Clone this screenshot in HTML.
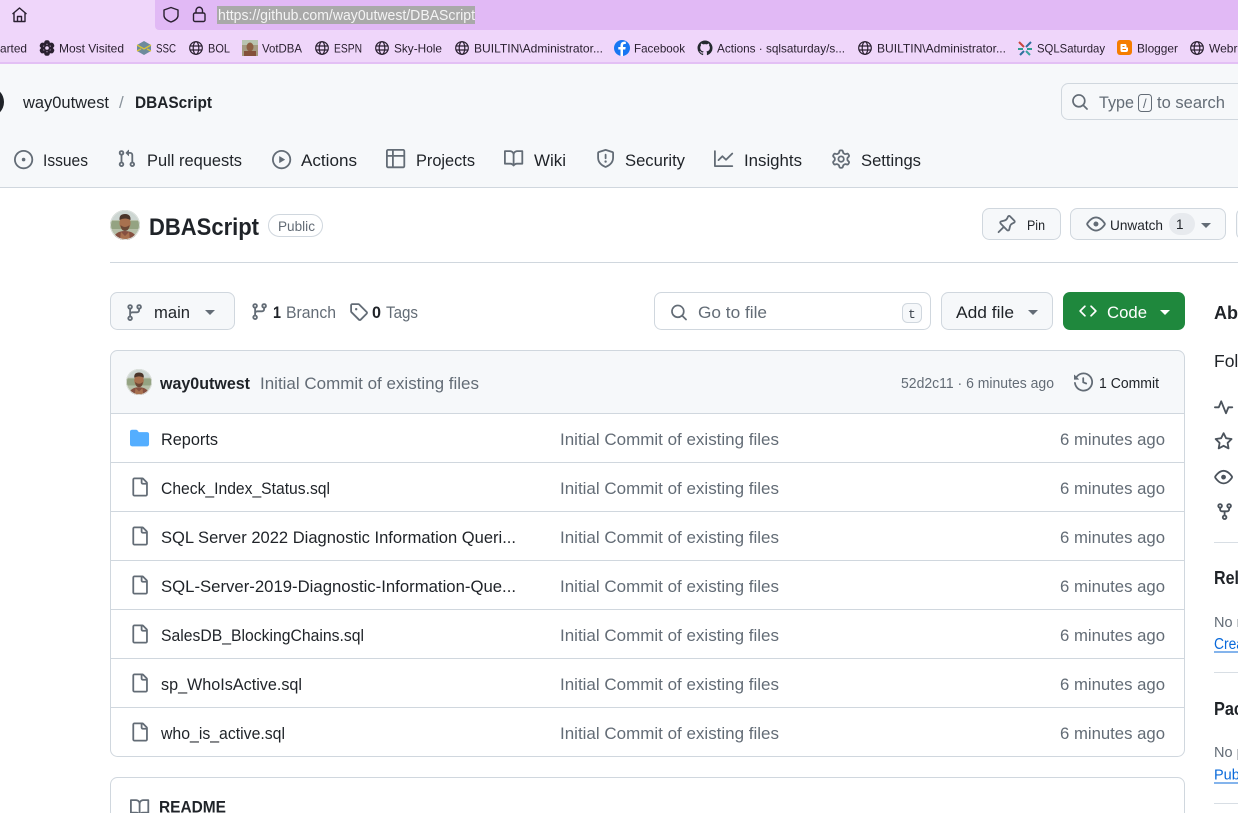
<!DOCTYPE html>
<html lang="en">
<head>
<meta charset="utf-8">
<title>DBAScript</title>
<style>
html,body{margin:0;padding:0;background:#fff;width:1238px;height:813px;overflow:hidden}
svg{display:block;overflow:hidden}
text{font-family:"Liberation Sans",Arial,sans-serif;fill:#1f2328;font-size:17px;white-space:pre}
.b{font-size:12px;fill:#2a2030}
.m{fill:#636c76}
.s{font-weight:700}
.i{fill:#636c76}
.box{fill:#f6f8fa;stroke:#d0d7de}
</style>
</head>
<body>
<svg width="1238" height="813" viewBox="0 0 1238 813" xmlns="http://www.w3.org/2000/svg">
<defs>
<path id="issue" d="M8 9.5a1.5 1.5 0 1 0 0-3 1.5 1.5 0 0 0 0 3ZM8 0a8 8 0 1 1 0 16A8 8 0 0 1 8 0ZM1.5 8a6.5 6.5 0 1 0 13 0 6.5 6.5 0 0 0-13 0Z"/>
<path id="pr" d="M1.5 3.25a2.25 2.25 0 1 1 3 2.122v5.256a2.251 2.251 0 1 1-1.5 0V5.372A2.25 2.25 0 0 1 1.5 3.25Zm5.677-.177L9.573.677A.25.25 0 0 1 10 .854V2.5h1A2.5 2.5 0 0 1 13.5 5v5.628a2.251 2.251 0 1 1-1.5 0V5a1 1 0 0 0-1-1h-1v1.646a.25.25 0 0 1-.427.177L7.177 3.427a.25.25 0 0 1 0-.354ZM3.75 2.5a.75.75 0 1 0 0 1.5.75.75 0 0 0 0-1.5Zm0 9.5a.75.75 0 1 0 0 1.5.75.75 0 0 0 0-1.5Zm8.25.75a.75.75 0 1 0 1.5 0 .75.75 0 0 0-1.5 0Z"/>
<path id="play" d="M8 0a8 8 0 1 1 0 16A8 8 0 0 1 8 0ZM1.5 8a6.5 6.5 0 1 0 13 0 6.5 6.5 0 0 0-13 0Zm4.879-2.773 4.264 2.559a.25.25 0 0 1 0 .428l-4.264 2.559A.25.25 0 0 1 6 10.559V5.442a.25.25 0 0 1 .379-.215Z"/>
<path id="table" d="M0 1.75C0 .784.784 0 1.75 0h12.5C15.216 0 16 .784 16 1.75v12.5A1.75 1.75 0 0 1 14.25 16H1.75A1.75 1.75 0 0 1 0 14.25ZM6.5 6.5v8h7.75a.25.25 0 0 0 .25-.25V6.5Zm8-1.5V1.75a.25.25 0 0 0-.25-.25H6.5V5Zm-13 1.5v7.75c0 .138.112.25.25.25H5v-8ZM5 5V1.5H1.75a.25.25 0 0 0-.25.25V5Z"/>
<path id="book" d="M0 1.75A.75.75 0 0 1 .75 1h4.253c1.227 0 2.317.59 3 1.501A3.743 3.743 0 0 1 11.006 1h4.245a.75.75 0 0 1 .75.75v10.5a.75.75 0 0 1-.75.75h-4.507a2.25 2.25 0 0 0-1.591.659l-.622.621a.75.75 0 0 1-1.06 0l-.622-.621A2.25 2.25 0 0 0 5.258 13H.75a.75.75 0 0 1-.75-.75Zm7.251 10.324.004-5.073-.002-2.253A2.25 2.25 0 0 0 5.003 2.5H1.5v9h3.757a3.75 3.75 0 0 1 1.994.574ZM8.755 4.75l-.004 7.322a3.752 3.752 0 0 1 1.992-.572H14.5v-9h-3.495a2.25 2.25 0 0 0-2.25 2.25Z"/>
<path id="shield" d="M7.467.133a1.748 1.748 0 0 1 1.066 0l5.25 1.68A1.75 1.75 0 0 1 15 3.48V7c0 1.566-.32 3.182-1.303 4.682-.983 1.498-2.585 2.813-5.032 3.855a1.697 1.697 0 0 1-1.33 0c-2.447-1.042-4.049-2.357-5.032-3.855C1.32 10.182 1 8.566 1 7V3.48a1.75 1.75 0 0 1 1.217-1.667Zm.61 1.429a.25.25 0 0 0-.153 0l-5.25 1.68a.25.25 0 0 0-.174.238V7c0 1.358.275 2.666 1.057 3.86.784 1.194 2.121 2.34 4.366 3.297a.196.196 0 0 0 .154 0c2.245-.956 3.582-2.104 4.366-3.298C13.225 9.666 13.5 8.36 13.5 7V3.48a.251.251 0 0 0-.174-.237l-5.25-1.68ZM8.75 4.75v3a.75.75 0 0 1-1.5 0v-3a.75.75 0 0 1 1.5 0ZM9 10.5a1 1 0 1 1-2 0 1 1 0 0 1 2 0Z"/>
<path id="graph" d="M1.5 1.75V13.5h13.75a.75.75 0 0 1 0 1.5H.75a.75.75 0 0 1-.75-.75V1.75a.75.75 0 0 1 1.5 0Zm14.28 2.53-5.25 5.25a.75.75 0 0 1-1.06 0L7 7.06 4.28 9.78a.751.751 0 0 1-1.042-.018.751.751 0 0 1-.018-1.042l3.25-3.25a.75.75 0 0 1 1.06 0L10 7.94l4.72-4.72a.751.751 0 0 1 1.042.018.751.751 0 0 1 .018 1.042Z"/>
<path id="gear" d="M8 0a8.2 8.2 0 0 1 .701.031C9.444.095 9.99.645 10.16 1.29l.288 1.107c.018.066.079.158.212.224.231.114.454.243.668.386.123.082.233.09.299.071l1.103-.303c.644-.176 1.392.021 1.82.63.27.385.506.792.704 1.218.315.675.111 1.422-.364 1.891l-.814.806c-.049.048-.098.147-.088.294.016.257.016.515 0 .772-.01.147.038.246.088.294l.814.806c.475.469.679 1.216.364 1.891a7.977 7.977 0 0 1-.704 1.217c-.428.61-1.176.807-1.82.63l-1.102-.302c-.067-.019-.177-.011-.3.071a5.909 5.909 0 0 1-.668.386c-.133.066-.194.158-.211.224l-.29 1.106c-.168.646-.715 1.196-1.458 1.26a8.006 8.006 0 0 1-1.402 0c-.743-.064-1.289-.614-1.458-1.26l-.289-1.106c-.018-.066-.079-.158-.212-.224a5.738 5.738 0 0 1-.668-.386c-.123-.082-.233-.09-.299-.071l-1.103.303c-.644.176-1.392-.021-1.82-.63a8.12 8.12 0 0 1-.704-1.218c-.315-.675-.111-1.422.363-1.891l.815-.806c.05-.048.098-.147.088-.294a6.214 6.214 0 0 1 0-.772c.01-.147-.038-.246-.088-.294l-.815-.806C.635 6.045.431 5.298.746 4.623a7.92 7.92 0 0 1 .704-1.217c.428-.61 1.176-.807 1.82-.63l1.102.302c.067.019.177.011.3-.071.214-.143.437-.272.668-.386.133-.066.194-.158.211-.224l.29-1.106C6.009.645 6.556.095 7.299.03 7.53.01 7.764 0 8 0Zm-.571 1.525c-.036.003-.108.036-.137.146l-.289 1.105c-.147.561-.549.967-.998 1.189-.173.086-.34.183-.5.29-.417.278-.97.423-1.529.27l-1.103-.303c-.109-.03-.175.016-.195.045-.22.312-.412.644-.573.99-.014.031-.021.11.059.19l.815.806c.411.406.562.957.53 1.456a4.709 4.709 0 0 0 0 .582c.032.499-.119 1.05-.53 1.456l-.815.806c-.081.08-.073.159-.059.19.162.346.353.677.573.989.02.03.085.076.195.046l1.102-.303c.56-.153 1.113-.008 1.53.27.161.107.328.204.501.29.447.222.85.629.997 1.189l.289 1.105c.029.109.101.143.137.146a6.6 6.6 0 0 0 1.142 0c.036-.003.108-.036.137-.146l.289-1.105c.147-.561.549-.967.998-1.189.173-.086.34-.183.5-.29.417-.278.97-.423 1.529-.27l1.103.303c.109.029.175-.016.195-.045.22-.313.411-.644.573-.99.014-.031.021-.11-.059-.19l-.815-.806c-.411-.406-.562-.957-.53-1.456a4.709 4.709 0 0 0 0-.582c-.032-.499.119-1.05.53-1.456l.815-.806c.081-.08.073-.159.059-.19a6.464 6.464 0 0 0-.573-.989c-.02-.03-.085-.076-.195-.046l-1.102.303c-.56.153-1.113.008-1.53-.27a4.44 4.44 0 0 0-.501-.29c-.447-.222-.85-.629-.997-1.189l-.289-1.105c-.029-.11-.101-.143-.137-.146a6.6 6.6 0 0 0-1.142 0ZM11 8a3 3 0 1 1-6 0 3 3 0 0 1 6 0ZM9.5 8a1.5 1.5 0 1 0-3.001.001A1.5 1.5 0 0 0 9.5 8Z"/>
<path id="search" d="M10.68 11.74a6 6 0 0 1-7.922-8.982 6 6 0 0 1 8.982 7.922l3.04 3.04a.749.749 0 0 1-.326 1.275.749.749 0 0 1-.734-.215ZM11.5 7a4.499 4.499 0 1 0-8.997 0A4.499 4.499 0 0 0 11.5 7Z"/>
<path id="eye" d="M8 2c1.981 0 3.671.992 4.933 2.078 1.27 1.091 2.187 2.345 2.637 3.023a1.62 1.62 0 0 1 0 1.798c-.45.678-1.367 1.932-2.637 3.023C11.67 13.008 9.981 14 8 14c-1.981 0-3.671-.992-4.933-2.078C1.797 10.83.88 9.576.43 8.898a1.62 1.62 0 0 1 0-1.798c.45-.677 1.367-1.931 2.637-3.022C4.33 2.992 6.019 2 8 2ZM1.679 7.932a.12.12 0 0 0 0 .136c.411.622 1.241 1.75 2.366 2.717C5.176 11.758 6.527 12.5 8 12.5c1.473 0 2.825-.742 3.955-1.715 1.124-.967 1.954-2.096 2.366-2.717a.12.12 0 0 0 0-.136c-.412-.621-1.242-1.75-2.366-2.717C10.824 4.242 9.473 3.5 8 3.5c-1.473 0-2.825.742-3.955 1.715-1.124.967-1.954 2.096-2.366 2.717ZM8 10a2 2 0 1 1-.001-3.999A2 2 0 0 1 8 10Z"/>
<path id="branch" d="M9.5 3.25a2.25 2.25 0 1 1 3 2.122V6A2.5 2.5 0 0 1 10 8.5H6a1 1 0 0 0-1 1v1.128a2.251 2.251 0 1 1-1.5 0V5.372a2.25 2.25 0 1 1 1.5 0v1.836A2.493 2.493 0 0 1 6 7h4a1 1 0 0 0 1-1v-.628A2.25 2.25 0 0 1 9.5 3.25Zm-6 0a.75.75 0 1 0 1.5 0 .75.75 0 0 0-1.5 0Zm8.25-.75a.75.75 0 1 0 0 1.5.75.75 0 0 0 0-1.5ZM4.25 12a.75.75 0 1 0 0 1.5.75.75 0 0 0 0-1.5Z"/>
<path id="tag" d="M1 7.775V2.75C1 1.784 1.784 1 2.75 1h5.025c.464 0 .91.184 1.238.513l6.25 6.25a1.75 1.75 0 0 1 0 2.474l-5.026 5.026a1.75 1.75 0 0 1-2.474 0l-6.25-6.25A1.752 1.752 0 0 1 1 7.775Zm1.5 0c0 .066.026.13.073.177l6.25 6.25a.25.25 0 0 0 .354 0l5.025-5.025a.25.25 0 0 0 0-.354l-6.25-6.25a.25.25 0 0 0-.177-.073H2.75a.25.25 0 0 0-.25.25ZM6 5a1 1 0 1 1 0 2 1 1 0 0 1 0-2Z"/>
<path id="code" d="m11.28 3.22 4.25 4.25a.75.75 0 0 1 0 1.06l-4.25 4.25a.749.749 0 0 1-1.275-.326.749.749 0 0 1 .215-.734L13.94 8l-3.72-3.72a.749.749 0 0 1 .326-1.275.749.749 0 0 1 .734.215Zm-6.56 0a.751.751 0 0 1 1.042.018.751.751 0 0 1 .018 1.042L2.06 8l3.72 3.72a.749.749 0 0 1-.326 1.275.749.749 0 0 1-.734-.215L.47 8.53a.75.75 0 0 1 0-1.06Z"/>
<path id="folder" d="M1.75 1A1.75 1.75 0 0 0 0 2.75v10.5C0 14.216.784 15 1.75 15h12.5A1.75 1.75 0 0 0 16 13.25v-8.5A1.75 1.75 0 0 0 14.25 3H7.5a.25.25 0 0 1-.2-.1l-.9-1.2C6.07 1.26 5.55 1 5 1H1.75Z"/>
<path id="file" d="M2 1.75C2 .784 2.784 0 3.75 0h6.586c.464 0 .909.184 1.237.513l2.914 2.914c.329.328.513.773.513 1.237v9.586A1.75 1.75 0 0 1 13.25 16h-9.5A1.75 1.75 0 0 1 2 14.25Zm1.75-.25a.25.25 0 0 0-.25.25v12.5c0 .138.112.25.25.25h9.5a.25.25 0 0 0 .25-.25V6h-2.75A1.75 1.75 0 0 1 9 4.25V1.5Zm6.75.062V4.25c0 .138.112.25.25.25h2.688l-.011-.013-2.914-2.914-.013-.011Z"/>
<path id="history" d="m.427 1.927 1.215 1.215a8.002 8.002 0 1 1-1.6 5.685.75.75 0 1 1 1.493-.154 6.5 6.5 0 1 0 1.18-4.458l1.358 1.358A.25.25 0 0 1 3.896 6H.25A.25.25 0 0 1 0 5.75V2.104a.25.25 0 0 1 .427-.177ZM7.75 4a.75.75 0 0 1 .75.75v2.992l2.028.812a.75.75 0 0 1-.557 1.392l-2.5-1A.751.751 0 0 1 7 8.25v-3.5A.75.75 0 0 1 7.75 4Z"/>
<path id="pulse" d="M6 2c.306 0 .582.187.696.471L10 10.731l1.304-3.26A.751.751 0 0 1 12 7h3.25a.75.75 0 0 1 0 1.5h-2.742l-1.812 4.528a.751.751 0 0 1-1.392 0L6 4.77 4.696 8.03A.75.75 0 0 1 4 8.5H.75a.75.75 0 0 1 0-1.5h2.742l1.812-4.529A.751.751 0 0 1 6 2Z"/>
<path id="star" d="M8 .25a.75.75 0 0 1 .673.418l1.882 3.815 4.21.612a.75.75 0 0 1 .416 1.279l-3.046 2.97.719 4.192a.751.751 0 0 1-1.088.791L8 12.347l-3.766 1.98a.75.75 0 0 1-1.088-.79l.72-4.194L.818 6.374a.75.75 0 0 1 .416-1.28l4.21-.611L7.327.668A.75.75 0 0 1 8 .25Zm0 2.445L6.615 5.5a.75.75 0 0 1-.564.41l-3.097.45 2.24 2.184a.75.75 0 0 1 .216.664l-.528 3.084 2.769-1.456a.75.75 0 0 1 .698 0l2.77 1.456-.53-3.084a.75.75 0 0 1 .216-.664l2.24-2.183-3.096-.45a.75.75 0 0 1-.564-.41L8 2.694Z"/>
<path id="fork" d="M5 5.372v.878c0 .414.336.75.75.75h4.5a.75.75 0 0 0 .75-.75v-.878a2.25 2.25 0 1 1 1.5 0v.878a2.25 2.25 0 0 1-2.25 2.25h-1.5v2.128a2.251 2.251 0 1 1-1.5 0V8.5h-1.5A2.25 2.25 0 0 1 3.5 6.25v-.878a2.25 2.25 0 1 1 1.5 0ZM5 3.25a.75.75 0 1 0-1.5 0 .75.75 0 0 0 1.5 0Zm6.75.75a.75.75 0 1 0 0-1.5.75.75 0 0 0 0 1.5Zm-3 8.75a.75.75 0 1 0-1.5 0 .75.75 0 0 0 1.5 0Z"/>
<path id="mark" d="M8 0c4.42 0 8 3.58 8 8a8.013 8.013 0 0 1-5.45 7.59c-.4.08-.55-.17-.55-.38 0-.27.01-1.13.01-2.2 0-.75-.25-1.23-.54-1.48 1.78-.2 3.65-.88 3.65-3.95 0-.88-.31-1.59-.82-2.15.08-.2.36-1.02-.08-2.12 0 0-.67-.22-2.2.82-.64-.18-1.32-.27-2-.27-.68 0-1.36.09-2 .27-1.53-1.03-2.2-.82-2.2-.82-.44 1.1-.16 1.92-.08 2.12-.51.56-.82 1.28-.82 2.15 0 3.06 1.86 3.75 3.64 3.95-.23.2-.44.55-.51 1.07-.46.21-1.61.55-2.33-.66-.15-.24-.6-.83-1.23-.82-.67.01-.27.38.01.53.34.19.73.9.82 1.13.16.45.68 1.31 2.69.94 0 .67.01 1.3.01 1.49 0 .21-.15.45-.55.38A7.995 7.995 0 0 1 0 8c0-4.42 3.58-8 8-8Z"/>
<g id="globe" fill="none" stroke="#2a2030" stroke-width="1.2"><circle cx="7" cy="7" r="6.3"/><ellipse cx="7" cy="7" rx="2.8" ry="6.3"/><path d="M.8 5h12.4M.8 9h12.4"/></g>
<clipPath id="c1"><circle cx="15" cy="15" r="15"/></clipPath>
<g id="ava" clip-path="url(#c1)"><rect width="30" height="30" fill="#b6bfa8"/><rect width="30" height="10" fill="#cdd6d2"/><rect y="11" width="30" height="8" fill="#94a382"/><ellipse cx="15" cy="13" rx="5.500" ry="7.500" fill="#a8714f"/><path d="M9.500 10q-.5-6 5.500-6t5.500 6q-5.500-3-11 0Z" fill="#4a352a"/><path d="M10.500 15q4.500 4 9 0q-.5 6-4.500 6t-4.500-6Z" fill="#6b4836"/><path d="M3 30q1.500-9 12-9t12 9Z" fill="#855040"/><path d="M11 22l4 4 4-4 1 8H10Z" fill="#a8714f"/><circle cx="15" cy="15" r="14.500" fill="none" stroke="#dfe3e0"/></g>
</defs>

<!-- browser chrome -->
<rect width="1238" height="64" fill="#efd6fa"/>
<path d="M155 0H1238V30H159a4 4 0 0 1-4-4Z" fill="#e1b9f5"/>
<rect y="62" width="1238" height="2" fill="#e3c0f5"/>
<g fill="none" stroke="#2a2030" stroke-width="1.4" stroke-linejoin="round">
<path d="M12.500 14 19.500 8 26.500 14M14 12.800V21.500H25V12.800"/><path d="M17.500 21.500V16.500H21.500V21.500"/>
<path d="M171 7.500 178 10V15.500Q178 19.500 171 22Q164 19.500 164 15.500V10Z"/>
<rect x="193.500" y="13" width="11.500" height="8.500" rx="1.500"/><path d="M196 13V10.500a3.200 3.200 0 0 1 6.500 0V13"/>
</g>
<rect x="217" y="6" width="258" height="18" fill="#a9a9a9"/>
<text x="218" y="20" textLength="257" lengthAdjust="spacingAndGlyphs" style="font-size:14.500px;fill:#f4f4f4">https://github.com/way0utwest/DBAScript</text>

<!-- bookmarks -->
<text class="b" x="0" y="52.500" textLength="27" lengthAdjust="spacingAndGlyphs">arted</text>
<use href="#gear" transform="translate(40 41) scale(.875)" fill="#2a2030" stroke="#2a2030" stroke-width="1.800"/>
<circle cx="47" cy="48" r="1.800" fill="#efd6fa"/>
<text class="b" x="59" y="52.500" textLength="65" lengthAdjust="spacingAndGlyphs">Most Visited</text>
<path d="M144 41 151 45V51L144 55 137 51V45Z" fill="#6d8a9c"/><path d="M137 45 144 49 151 45M137 51 141 49M151 51 147 49" stroke="#d8c33a" stroke-width="1.300" fill="none"/>
<text class="b" x="156" y="52.500" textLength="20" lengthAdjust="spacingAndGlyphs">SSC</text>
<use href="#globe" x="189" y="41"/><text class="b" x="208" y="52.500" textLength="22" lengthAdjust="spacingAndGlyphs">BOL</text>
<rect x="242" y="40" width="16" height="16" fill="#a49a80"/><rect x="242" y="40" width="16" height="5" fill="#b9c4b0"/><ellipse cx="250" cy="47" rx="3.500" ry="4.500" fill="#8d5f43"/><rect x="244" y="51" width="12" height="5" fill="#84503a"/>
<text class="b" x="262" y="52.500" textLength="40" lengthAdjust="spacingAndGlyphs">VotDBA</text>
<use href="#globe" x="315" y="41"/><text class="b" x="334" y="52.500" textLength="28" lengthAdjust="spacingAndGlyphs">ESPN</text>
<use href="#globe" x="375" y="41"/><text class="b" x="394" y="52.500" textLength="48" lengthAdjust="spacingAndGlyphs">Sky-Hole</text>
<use href="#globe" x="455" y="41"/><text class="b" x="474" y="52.500" textLength="129" lengthAdjust="spacingAndGlyphs">BUILTIN\Administrator...</text>
<circle cx="622" cy="48" r="8" fill="#1877f2"/><path d="M623 56V49.500H625.300L625.700 47H623V45.500Q623 44 624.600 44H625.800V41.800Q621 41 620.500 45V47H618.300V49.500H620.500V56Z" fill="#fff"/>
<text class="b" x="634" y="52.500" textLength="51" lengthAdjust="spacingAndGlyphs">Facebook</text>
<use href="#mark" fill="#24292f" transform="translate(697.500 40.500) scale(.94)"/>
<text class="b" x="717" y="52.500" textLength="128" lengthAdjust="spacingAndGlyphs">Actions · sqlsaturday/s...</text>
<use href="#globe" x="858" y="41"/><text class="b" x="877" y="52.500" textLength="129" lengthAdjust="spacingAndGlyphs">BUILTIN\Administrator...</text>
<g fill="none" stroke-width="2"><path d="M1019 42 1024 47" stroke="#c9463d"/><path d="M1031 42 1026 47" stroke="#2f6f9e"/><path d="M1018 49H1023" stroke="#2f9e8f"/><path d="M1032 49H1027" stroke="#2f9e8f"/><path d="M1020 55 1024 51" stroke="#2f6f9e"/><path d="M1030 55 1026 51" stroke="#39a0a0"/></g>
<text class="b" x="1037" y="52.500" textLength="68" lengthAdjust="spacingAndGlyphs">SQLSaturday</text>
<rect x="1117" y="40" width="15" height="15" rx="3" fill="#f57d00"/><path d="M1121 44H1125.500Q1126.500 44 1126.500 46.500V47.500H1128V50Q1128 52 1126 52H1122Q1120.500 52 1120.500 50.500V45Q1120.500 44 1121 44Z" fill="#fff"/><path d="M1122.500 46.500H1124.500M1122.500 49.500H1126" stroke="#f57d00" stroke-width="1"/>
<text class="b" x="1137" y="52.500" textLength="41" lengthAdjust="spacingAndGlyphs">Blogger</text>
<use href="#globe" x="1190" y="41"/><text class="b" x="1209" y="52.500">Webroot</text>

<!-- github header -->
<rect y="64" width="1238" height="123" fill="#f6f8fa"/>
<rect y="187" width="1238" height="1" fill="#d0d7de"/>
<circle cx="-11" cy="102" r="15" fill="#1f2328"/>
<text x="23" y="108" textLength="86" lengthAdjust="spacingAndGlyphs">way0utwest</text>
<text class="m" x="119" y="108" style="fill:#8a939c">/</text>
<text class="s" x="135" y="108" textLength="77" lengthAdjust="spacingAndGlyphs">DBAScript</text>
<path d="M1238 83.500H1068.500a7 7 0 0 0-7 7v22a7 7 0 0 0 7 7H1238" fill="none" stroke="#d0d7de"/>
<use href="#search" class="i" transform="translate(1071 93) scale(1.125)"/>
<text class="m" x="1099" y="108" textLength="35" lengthAdjust="spacingAndGlyphs">Type</text>
<rect x="1138.500" y="94.500" width="13" height="17" rx="3" fill="none" stroke="#636c76"/>
<text class="m" x="1143" y="108" style="font-size:13px">/</text>
<text class="m" x="1157" y="108" textLength="68" lengthAdjust="spacingAndGlyphs">to search</text>

<use href="#issue" class="i" transform="translate(14 150) scale(1.200)"/>
<text x="43" y="166" textLength="45" lengthAdjust="spacingAndGlyphs">Issues</text>
<use href="#pr" class="i" transform="translate(117 149) scale(1.200)"/>
<text x="147" y="166" textLength="95" lengthAdjust="spacingAndGlyphs">Pull requests</text>
<use href="#play" class="i" transform="translate(272 150) scale(1.200)"/>
<text x="301" y="166" textLength="56" lengthAdjust="spacingAndGlyphs">Actions</text>
<use href="#table" class="i" transform="translate(386 149) scale(1.200)"/>
<text x="416" y="166" textLength="59" lengthAdjust="spacingAndGlyphs">Projects</text>
<use href="#book" class="i" transform="translate(504 149) scale(1.200)"/>
<text x="534" y="166" textLength="32" lengthAdjust="spacingAndGlyphs">Wiki</text>
<use href="#shield" class="i" transform="translate(596 149) scale(1.200)"/>
<text x="625" y="166" textLength="60" lengthAdjust="spacingAndGlyphs">Security</text>
<use href="#graph" class="i" transform="translate(714 149) scale(1.200)"/>
<text x="744" y="166" textLength="58" lengthAdjust="spacingAndGlyphs">Insights</text>
<use href="#gear" class="i" transform="translate(831.500 149.500) scale(1.200)"/>
<text x="861" y="166" textLength="60" lengthAdjust="spacingAndGlyphs">Settings</text>

<!-- repo title -->
<use href="#ava" x="110" y="210"/>
<text class="s" x="149" y="235" textLength="110" lengthAdjust="spacingAndGlyphs" style="font-size:24px">DBAScript</text>
<rect x="268.500" y="214.500" width="54" height="22" rx="11" fill="#fff" stroke="#d0d7de"/>
<text class="m" x="278" y="231" textLength="37" lengthAdjust="spacingAndGlyphs" style="font-size:13.500px">Public</text>

<rect class="box" x="982.500" y="208.500" width="78" height="31" rx="7"/>
<path d="M10.800 1.500 14.500 5.200a1 1 0 0 1-.3 1.600l-1.300.6a3.800 3.800 0 0 0-2.100 2.600l-.6 2.500c-.2.800-1.200 1.100-1.800.5L3 7.500c-.6-.6-.3-1.600.5-1.800l2.500-.6a3.800 3.800 0 0 0 2.600-2.100l.6-1.300a1 1 0 0 1 1.600-.2ZM5.400 10.600 1.300 14.700" transform="translate(997 214.500) scale(1.200)" fill="none" stroke="#636c76" stroke-width="1.500" stroke-linejoin="round" stroke-linecap="round"/>
<text x="1027" y="230" textLength="18" lengthAdjust="spacingAndGlyphs" style="font-size:14px">Pin</text>
<rect class="box" x="1070.500" y="208.500" width="155" height="31" rx="7"/>
<use href="#eye" class="i" transform="translate(1086 214) scale(1.250)"/>
<text x="1110" y="230" textLength="53" lengthAdjust="spacingAndGlyphs" style="font-size:14px">Unwatch</text>
<rect x="1169" y="213" width="26" height="22" rx="11" fill="#e7eaee"/>
<text x="1176" y="229" style="font-size:13.500px">1</text>
<path d="M1201 223H1211L1206 228Z" fill="#636c76"/>
<path d="M1238 208.500H1243.500a7 7 0 0 0-7 7v17a7 7 0 0 0 7 7H1238" fill="#f6f8fa" stroke="#d0d7de"/>
<rect x="110" y="262" width="1128" height="1" fill="#d0d7de"/>

<!-- toolbar row -->
<rect class="box" x="110.500" y="292.500" width="124" height="37" rx="7"/>
<use href="#branch" class="i" transform="translate(125 303) scale(1.200)"/>
<text x="154" y="318" textLength="36" lengthAdjust="spacingAndGlyphs">main</text>
<path d="M205 310H215L210 315Z" fill="#636c76"/>
<use href="#branch" class="i" transform="translate(250 302) scale(1.200)"/>
<text class="s" x="273" y="318" textLength="8" lengthAdjust="spacingAndGlyphs">1</text>
<text class="m" x="286" y="318" textLength="50" lengthAdjust="spacingAndGlyphs">Branch</text>
<use href="#tag" class="i" transform="translate(349 302) scale(1.200)"/>
<text class="s" x="372" y="318" textLength="9" lengthAdjust="spacingAndGlyphs">0</text>
<text class="m" x="386" y="318" textLength="32" lengthAdjust="spacingAndGlyphs">Tags</text>

<rect x="654.500" y="292.500" width="276" height="37" rx="7" fill="#fff" stroke="#d0d7de"/>
<use href="#search" class="i" transform="translate(670 303.500) scale(1.125)"/>
<text class="m" x="698" y="318" textLength="69" lengthAdjust="spacingAndGlyphs">Go to file</text>
<rect class="box" x="902.500" y="303.500" width="19" height="19" rx="5"/>
<text x="908" y="318" style="font-family:'Liberation Mono',monospace;font-size:13px;fill:#3d444d">t</text>
<rect class="box" x="941.500" y="292.500" width="111" height="37" rx="7"/>
<text x="956" y="318" textLength="58" lengthAdjust="spacingAndGlyphs">Add file</text>
<path d="M1028 310H1038L1033 315Z" fill="#636c76"/>
<rect x="1063" y="292" width="122" height="38" rx="7" fill="#1f883d"/>
<use href="#code" fill="#fff" transform="translate(1079 302) scale(1.125)"/>
<text x="1107" y="318" textLength="40" lengthAdjust="spacingAndGlyphs" style="fill:#fff">Code</text>
<path d="M1160 310H1170L1165 315Z" fill="#fff"/>

<!-- file table -->
<path d="M110.500 413V357.500a7 7 0 0 1 7-7H1177.500a7 7 0 0 1 7 7V413Z" fill="#f6f8fa"/>
<rect x="110.500" y="350.500" width="1074" height="406" rx="7" fill="none" stroke="#d0d7de"/>
<g fill="#d0d7de"><rect x="111" y="413" width="1073" height="1"/><rect x="111" y="462" width="1073" height="1"/><rect x="111" y="511" width="1073" height="1"/><rect x="111" y="560" width="1073" height="1"/><rect x="111" y="609" width="1073" height="1"/><rect x="111" y="658" width="1073" height="1"/><rect x="111" y="707" width="1073" height="1"/></g>

<use href="#ava" transform="translate(126 369) scale(.867)"/>
<text class="s" x="160" y="389" textLength="90" lengthAdjust="spacingAndGlyphs">way0utwest</text>
<text class="m" x="260" y="389" textLength="219" lengthAdjust="spacingAndGlyphs">Initial Commit of existing files</text>
<text class="m" x="901" y="388" textLength="153" lengthAdjust="spacingAndGlyphs" style="font-size:14.500px">52d2c11 · 6 minutes ago</text>
<use href="#history" class="i" transform="translate(1074 372.500) scale(1.190)"/>
<text x="1099" y="388" textLength="60" lengthAdjust="spacingAndGlyphs" style="font-size:14.500px">1 Commit</text>

<use href="#folder" fill="#54aeff" transform="translate(130 428.500) scale(1.190)"/>
<text x="161" y="445" textLength="57" lengthAdjust="spacingAndGlyphs">Reports</text>
<text class="m" x="560" y="445" textLength="219" lengthAdjust="spacingAndGlyphs">Initial Commit of existing files</text>
<text class="m" x="1060" y="445" textLength="105" lengthAdjust="spacingAndGlyphs">6 minutes ago</text>

<use href="#file" class="i" transform="translate(130 477.500) scale(1.190)"/>
<text x="161" y="494" textLength="169" lengthAdjust="spacingAndGlyphs">Check_Index_Status.sql</text>
<text class="m" x="560" y="494" textLength="219" lengthAdjust="spacingAndGlyphs">Initial Commit of existing files</text>
<text class="m" x="1060" y="494" textLength="105" lengthAdjust="spacingAndGlyphs">6 minutes ago</text>

<use href="#file" class="i" transform="translate(130 526.500) scale(1.190)"/>
<text x="161" y="543" textLength="355" lengthAdjust="spacingAndGlyphs">SQL Server 2022 Diagnostic Information Queri...</text>
<text class="m" x="560" y="543" textLength="219" lengthAdjust="spacingAndGlyphs">Initial Commit of existing files</text>
<text class="m" x="1060" y="543" textLength="105" lengthAdjust="spacingAndGlyphs">6 minutes ago</text>

<use href="#file" class="i" transform="translate(130 575.500) scale(1.190)"/>
<text x="161" y="592" textLength="355" lengthAdjust="spacingAndGlyphs">SQL-Server-2019-Diagnostic-Information-Que...</text>
<text class="m" x="560" y="592" textLength="219" lengthAdjust="spacingAndGlyphs">Initial Commit of existing files</text>
<text class="m" x="1060" y="592" textLength="105" lengthAdjust="spacingAndGlyphs">6 minutes ago</text>

<use href="#file" class="i" transform="translate(130 624.500) scale(1.190)"/>
<text x="161" y="641" textLength="203" lengthAdjust="spacingAndGlyphs">SalesDB_BlockingChains.sql</text>
<text class="m" x="560" y="641" textLength="219" lengthAdjust="spacingAndGlyphs">Initial Commit of existing files</text>
<text class="m" x="1060" y="641" textLength="105" lengthAdjust="spacingAndGlyphs">6 minutes ago</text>

<use href="#file" class="i" transform="translate(130 673.500) scale(1.190)"/>
<text x="161" y="690" textLength="141" lengthAdjust="spacingAndGlyphs">sp_WhoIsActive.sql</text>
<text class="m" x="560" y="690" textLength="219" lengthAdjust="spacingAndGlyphs">Initial Commit of existing files</text>
<text class="m" x="1060" y="690" textLength="105" lengthAdjust="spacingAndGlyphs">6 minutes ago</text>

<use href="#file" class="i" transform="translate(130 722.500) scale(1.190)"/>
<text x="161" y="739" textLength="124" lengthAdjust="spacingAndGlyphs">who_is_active.sql</text>
<text class="m" x="560" y="739" textLength="219" lengthAdjust="spacingAndGlyphs">Initial Commit of existing files</text>
<text class="m" x="1060" y="739" textLength="105" lengthAdjust="spacingAndGlyphs">6 minutes ago</text>

<!-- readme -->
<path d="M110.500 813V784.500a7 7 0 0 1 7-7H1177.500a7 7 0 0 1 7 7V813" fill="#fff" stroke="#d0d7de"/>
<use href="#book" class="i" transform="translate(130 798) scale(1.200)"/>
<text class="s" x="159" y="812.500" textLength="67" lengthAdjust="spacingAndGlyphs">README</text>

<!-- sidebar -->
<text class="s" x="1214" y="319" style="font-size:18px">Ab</text>
<text x="1214" y="367" style="font-size:17.500px">Fol</text>
<use href="#pulse" style="fill:#4b535c" transform="translate(1214 398) scale(1.200)"/>
<use href="#star" style="fill:#4b535c" transform="translate(1214 432) scale(1.200)"/>
<use href="#eye" style="fill:#4b535c" transform="translate(1214 467.500) scale(1.200)"/>
<use href="#fork" style="fill:#4b535c" transform="translate(1215 502) scale(1.200)"/>
<rect x="1214" y="542" width="24" height="1" fill="#d8dee4"/>
<text class="s" x="1214" y="584" textLength="25" lengthAdjust="spacingAndGlyphs" style="font-size:18.500px">Rel</text>
<text class="m" x="1214" y="627" style="font-size:14.500px">No r</text>
<text x="1214" y="649" textLength="30" lengthAdjust="spacingAndGlyphs" style="font-size:15.500px;fill:#0969da">Crea</text>
<rect x="1214" y="651.500" width="24" height="1" fill="#0969da"/>
<rect x="1214" y="672" width="24" height="1" fill="#d8dee4"/>
<text class="s" x="1214" y="715" textLength="29" lengthAdjust="spacingAndGlyphs" style="font-size:18.500px">Pac</text>
<text class="m" x="1214" y="757" style="font-size:14.500px">No p</text>
<text x="1214" y="779.500" style="font-size:14.500px;fill:#0969da">Pub</text>
<rect x="1214" y="782.500" width="24" height="1" fill="#0969da"/>
<rect x="1214" y="803" width="24" height="1" fill="#d8dee4"/>
</svg>
</body>
</html>
